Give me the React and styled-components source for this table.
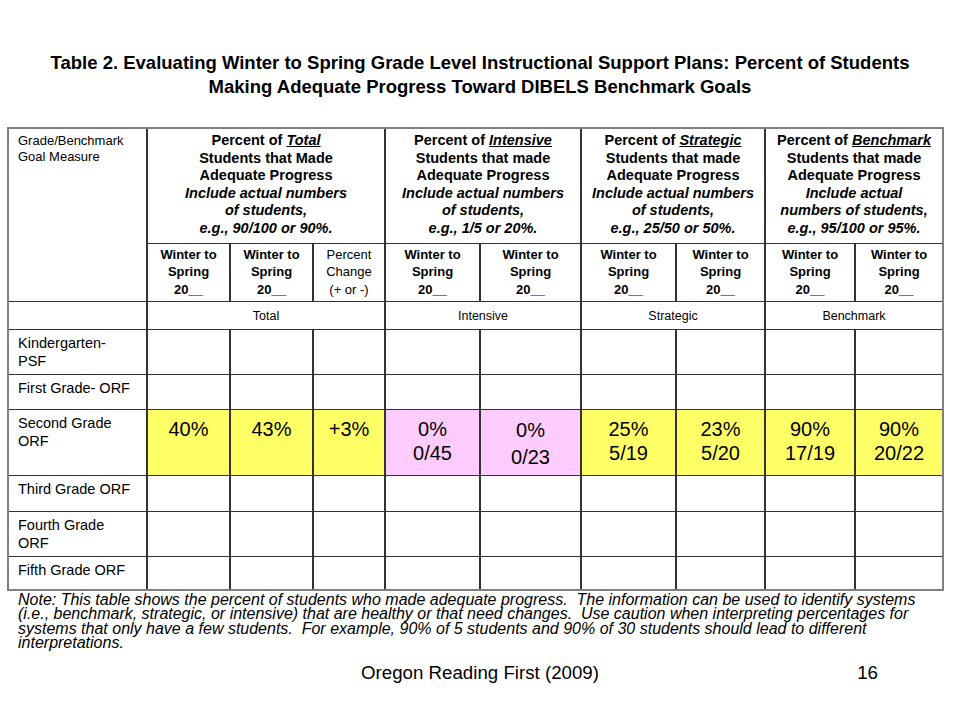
import React from "react";
import styled, { createGlobalStyle } from "styled-components";

const GlobalStyle = createGlobalStyle`
  html, body {
    margin: 0;
    padding: 0;
    background: #fff;
  }
  body {
    font-family: "Liberation Sans", Arial, sans-serif;
    color: #000;
  }
`;

const Slide = styled.div`
  width: 960px;
  height: 720px;
  display: flex;
  flex-direction: column;
  overflow: hidden;
`;

const Title = styled.h1`
  margin: 0;
  padding-top: 51px;
  font-size: 18.5px;
  line-height: 24px;
  font-weight: bold;
  text-align: center;
`;

// the table: gaps show the background, so they draw the rules
const Grid = styled.div`
  margin: 28px 0 0 7px;
  width: 933px;
  display: grid;
  grid-template-columns: 137px 81px 81px 70px 93px 99px 93px 87px 88px 86px;
  grid-template-rows: 114px 57px 27px 44px 34px 65px 35px 44px 32px;
  column-gap: 2px;
  row-gap: 1px;
  background: #333;
  border: 2px solid #808080;
`;

const Cell = styled.div`
  background: ${(p) => p.$bg || "#fff"};
  grid-column: span ${(p) => p.$span || 1};
  grid-row: span ${(p) => p.$rows || 1};
  overflow: hidden;
`;

const StubHead = styled(Cell)`
  padding: 4px 0 0 9px;
  font-size: 13px;
  line-height: 15.5px;
`;

const GroupHead = styled(Cell)`
  padding-top: 3px;
  font-size: 14.5px;
  line-height: 17.5px;
  font-weight: bold;
  text-align: center;
  white-space: nowrap;

  em {
    font-style: italic;
  }
  u {
    text-decoration: underline;
  }
`;

const SubHead = styled(Cell)`
  padding-top: 2px;
  font-size: 13px;
  line-height: 17.3px;
  font-weight: ${(p) => (p.$plain ? "normal" : "bold")};
  text-align: center;
  white-space: nowrap;
`;

const GroupLabel = styled(Cell)`
  display: flex;
  align-items: center;
  justify-content: center;
  font-size: 12.5px;
`;

const RowLabel = styled(Cell)`
  padding: 4px 0 0 9px;
  font-size: 14.5px;
  line-height: 18px;
  white-space: nowrap;
`;

const Value = styled(Cell)`
  padding-top: 7px;
  font-size: 20px;
  line-height: ${(p) => (p.$loose ? "27px" : "24px")};
  text-align: center;
  white-space: nowrap;
`;

const Note = styled.p`
  margin: 2px 0 0 18px;
  font-size: 16px;
  line-height: 14.4px;
  font-style: italic;
`;

const NoteLine = styled.span`
  display: block;
  white-space: pre;
`;

const Footer = styled.div`
  margin-top: 10px;
  display: grid;
  grid-template-columns: 1fr auto 1fr;
  font-size: 18.7px;
  line-height: 24px;
`;

const PageNo = styled.span`
  text-align: right;
  padding-right: 82px;
`;

const YELLOW = "#ffff66";
const PINK = "#ffccff";

const groups = [
  {
    key: "Total",
    span: 3,
    second: "Students that Made",
    note: ["Include actual numbers", "of students,", "e.g., 90/100 or 90%."],
  },
  {
    key: "Intensive",
    span: 2,
    second: "Students that made",
    note: ["Include actual numbers", "of students,", "e.g., 1/5 or 20%."],
  },
  {
    key: "Strategic",
    span: 2,
    second: "Students that made",
    note: ["Include actual numbers", "of students,", "e.g., 25/50 or 50%."],
  },
  {
    key: "Benchmark",
    span: 2,
    second: "Students that made",
    note: ["Include actual", "numbers of students,", "e.g., 95/100 or 95%."],
  },
];

const subHeads = [
  { lines: ["Winter to", "Spring", "20__"] },
  { lines: ["Winter to", "Spring", "20__"] },
  { lines: ["Percent", "Change", "(+ or -)"], plain: true },
  { lines: ["Winter to", "Spring", "20__"] },
  { lines: ["Winter to", "Spring", "20__"] },
  { lines: ["Winter to", "Spring", "20__"] },
  { lines: ["Winter to", "Spring", "20__"] },
  { lines: ["Winter to", "Spring", "20__"] },
  { lines: ["Winter to", "Spring", "20__"] },
];

const rows = [
  { label: ["Kindergarten-", "PSF"] },
  { label: ["First Grade- ORF"] },
  {
    label: ["Second Grade", "ORF"],
    values: [
      { lines: ["40%"], bg: YELLOW },
      { lines: ["43%"], bg: YELLOW },
      { lines: ["+3%"], bg: YELLOW },
      { lines: ["0%", "0/45"], bg: PINK },
      { lines: ["0%", "0/23"], bg: PINK, loose: true },
      { lines: ["25%", "5/19"], bg: YELLOW },
      { lines: ["23%", "5/20"], bg: YELLOW },
      { lines: ["90%", "17/19"], bg: YELLOW },
      { lines: ["90%", "20/22"], bg: YELLOW },
    ],
  },
  { label: ["Third Grade ORF"] },
  { label: ["Fourth Grade", "ORF"] },
  { label: ["Fifth Grade ORF"] },
];

const noteLines = [
  "Note: This table shows the percent of students who made adequate progress.\u00a0 The information can be used to identify systems",
  "(i.e., benchmark, strategic, or intensive) that are healthy or that need changes.\u00a0 Use caution when interpreting percentages for",
  "systems that only have a few students.\u00a0 For example, 90% of 5 students and 90% of 30 students should lead to different",
  "interpretations.",
];

const Lines = ({ lines }) =>
  lines.map((line, i) => (
    <React.Fragment key={i}>
      {i > 0 && <br />}
      {line}
    </React.Fragment>
  ));

export default function App() {
  return (
    <Slide>
      <GlobalStyle />
      <Title>
        Table 2. Evaluating Winter to Spring Grade Level Instructional Support
        Plans: Percent of Students
        <br />
        Making Adequate Progress Toward DIBELS Benchmark Goals
      </Title>

      <Grid>
        <StubHead $rows={2}>
          Grade/Benchmark
          <br />
          Goal Measure
        </StubHead>
        {groups.map((g) => (
          <GroupHead key={g.key} $span={g.span}>
            Percent of{" "}
            <em>
              <u>{g.key}</u>
            </em>
            <br />
            {g.second}
            <br />
            Adequate Progress
            <br />
            <em>
              <Lines lines={g.note} />
            </em>
          </GroupHead>
        ))}

        {subHeads.map((s, i) => (
          <SubHead key={i} $plain={s.plain}>
            <Lines lines={s.lines} />
          </SubHead>
        ))}

        <Cell />
        {groups.map((g) => (
          <GroupLabel key={g.key} $span={g.span}>
            {g.key}
          </GroupLabel>
        ))}

        {rows.map((r, ri) => (
          <React.Fragment key={ri}>
            <RowLabel>
              <Lines lines={r.label} />
            </RowLabel>
            {Array.from({ length: 9 }).map((_, ci) => {
              const v = r.values && r.values[ci];
              return v ? (
                <Value key={ci} $bg={v.bg} $loose={v.loose}>
                  <Lines lines={v.lines} />
                </Value>
              ) : (
                <Cell key={ci} />
              );
            })}
          </React.Fragment>
        ))}
      </Grid>

      <Note>
        {noteLines.map((line, i) => (
          <NoteLine key={i}>{line}</NoteLine>
        ))}
      </Note>

      <Footer>
        <span />
        <span>Oregon Reading First (2009)</span>
        <PageNo>16</PageNo>
      </Footer>
    </Slide>
  );
}
